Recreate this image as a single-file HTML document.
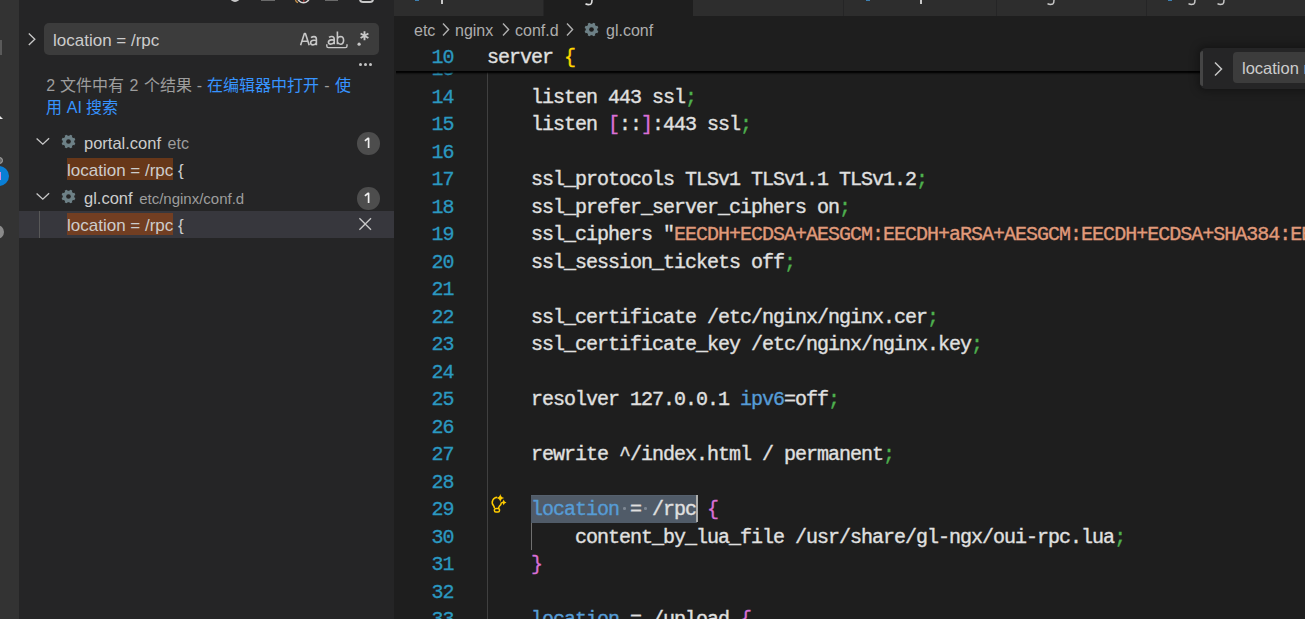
<!DOCTYPE html>
<html lang="zh-CN"><head><meta charset="utf-8">
<style>
*{box-sizing:border-box;margin:0;padding:0}
html,body{width:1305px;height:619px;overflow:hidden;background:#1e1e1e;font-family:"Liberation Sans",sans-serif;position:relative}
.a{position:absolute}
.t{position:absolute;white-space:pre;font-size:17px;line-height:22px;color:#cccccc}
.code{position:absolute;left:487px;white-space:pre;font-family:"Liberation Mono",monospace;font-size:20px;letter-spacing:-1px;line-height:27.5px;height:27.5px;color:#e0e0e0;padding-top:1.45px;-webkit-text-stroke:0.35px}
.ln{position:absolute;left:393.5px;width:60px;text-align:right;font-family:"Liberation Mono",monospace;font-size:20px;letter-spacing:-1px;line-height:27.5px;height:27.5px;color:#2b98c0;padding-top:1.45px;-webkit-text-stroke:0.3px}
.semi{color:#4eb04e}
.b1{color:#ffd700}
.b2{color:#da70d6}
.kw{color:#569cd6}
.str{color:#e09a7a}
.ws{color:#6a7380}
</style></head><body>
<svg width="0" height="0" style="position:absolute"><defs>
<mask id="gm"><rect x="0" y="0" width="16" height="16" fill="#fff"/><circle cx="8" cy="8" r="2.5" fill="#000"/></mask>
<symbol id="gear" viewBox="0 0 16 16"><g mask="url(#gm)" fill="#6d8086"><circle cx="8" cy="8" r="6.1"/><path d="M11.97 11.48 L14.34 12.03 L15.33 9.63 L13.27 8.34ZM8.34 13.27 L9.63 15.33 L12.03 14.34 L11.48 11.97ZM4.52 11.97 L3.97 14.34 L6.37 15.33 L7.66 13.27ZM2.73 8.34 L0.67 9.63 L1.66 12.03 L4.03 11.48ZM4.03 4.52 L1.66 3.97 L0.67 6.37 L2.73 7.66ZM7.66 2.73 L6.37 0.67 L3.97 1.66 L4.52 4.03ZM11.48 4.03 L12.03 1.66 L9.63 0.67 L8.34 2.73ZM13.27 7.66 L15.33 6.37 L14.34 3.97 L11.97 4.52Z"/></g></symbol>
</defs></svg>
<!-- activity bar -->
<div class="a" style="left:0;top:0;width:19px;height:619px;background:#333333"></div>
<div class="a" style="left:0;top:40px;width:2px;height:15px;background:#5a5a5a"></div>
<div class="a" style="left:-5px;top:115px;width:0;height:0;border-left:4.5px solid transparent;border-right:4.5px solid transparent;border-bottom:4px solid #e8e8e8"></div>
<div class="a" style="left:-4.5px;top:156.5px;width:7.5px;height:7.5px;border-radius:50%;background:#6a6a6a;border:1.5px solid #a8a8a8"></div>
<div class="a" style="left:-11px;top:166px;width:20px;height:20px;border-radius:50%;background:#0a7fd6"></div>
<div class="a" style="left:0;top:172px;width:1px;height:8px;background:#d58ae6"></div>
<div class="a" style="left:-10px;top:225px;width:14px;height:14px;border-radius:50%;background:#8a8a8a"></div>

<!-- sidebar -->
<div class="a" style="left:19px;top:0;width:375px;height:619px;background:#252526"></div>
<!-- top cut icons -->
<div class="a" style="left:230px;top:-8px;width:10px;height:10px;border-radius:50%;background:#c8c8c8"></div>
<div class="a" style="left:261px;top:0;width:14px;height:1px;background:#6a6a6a"></div>
<svg class="a" style="left:290px;top:0" width="24" height="6" viewBox="290 0 24 6"><path d="M295.5 0 Q296 2 298 2.6" fill="none" stroke="#c89048" stroke-width="1.3"/><circle cx="303.5" cy="-3.2" r="6" fill="none" stroke="#d8d8d8" stroke-width="1.6"/><path d="M303.8 0 V2" stroke="#c04040" stroke-width="1.2"/></svg>
<div class="a" style="left:325px;top:0;width:13px;height:1px;background:#6a6a6a"></div>
<div class="a" style="left:359px;top:-10px;width:15px;height:13px;border-radius:4px;border:2px solid #c8c8c8"></div>

<!-- chevron -->
<svg class="a" style="left:27px;top:32px" width="14" height="16" viewBox="0 0 14 16"><path d="M1.8 1.6 L7.8 7.3 L1.8 13" fill="none" stroke="#c8c8c8" stroke-width="1.35"/></svg>
<!-- search box -->
<div class="a" style="left:44px;top:23px;width:335px;height:32px;background:#3c3c3c;border-radius:5px"></div>
<div class="t" style="left:53px;top:30px">location = /rpc</div>
<svg class="a" style="left:290px;top:24px" width="90" height="30" viewBox="290 24 90 30">
<g fill="none" stroke="#c8c8c8" stroke-width="1.6" stroke-linejoin="round">
<path d="M300.6 45.2 L304.4 33.6 H305.4 L309.2 45.2 M301.9 41.3 H307.9"/>
<path d="M311 37.6 Q312.5 36.5 314.2 36.6 Q316.4 36.8 316.4 39.2 V45.2 M316.4 40.6 Q315.8 40.1 313.8 40.2 Q310.6 40.5 310.6 42.7 Q310.7 44.9 312.9 44.9 Q315.2 44.9 316.4 42.6"/>
<path d="M329 37.4 Q330.3 36.4 331.9 36.5 Q334.2 36.7 334.2 39 V44.2 M334.2 40.2 Q333.5 39.8 331.6 39.9 Q328.4 40.2 328.4 42.2 Q328.6 44.1 330.6 44.1 Q333 44.1 334.2 42.1"/>
<path d="M337.4 31.4 V44.2 M337.4 38.8 Q338.2 36.5 340.5 36.5 Q343.6 36.6 343.6 40.3 Q343.6 44.2 340.5 44.2 Q338.2 44.2 337.4 42"/>
<path d="M326.8 44.2 V46 Q326.8 47.6 328.4 47.6 H345.4 Q347 47.6 347 46 V44.2" stroke-width="1.4"/>
</g>
<circle cx="359.1" cy="44.2" r="1.6" fill="#c8c8c8"/>
<g stroke="#c8c8c8" stroke-width="1.9" stroke-linecap="butt"><path d="M364.5 31.3 V40.2 M360.6 33.5 L368.4 38 M360.6 38 L368.4 33.5"/></g>
</svg>
<!-- more dots -->
<div class="a" style="left:359px;top:63px;width:3px;height:3px;border-radius:50%;background:#c5c5c5"></div>
<div class="a" style="left:364px;top:63px;width:3px;height:3px;border-radius:50%;background:#c5c5c5"></div>
<div class="a" style="left:369px;top:63px;width:3px;height:3px;border-radius:50%;background:#c5c5c5"></div>

<!-- message -->
<div class="t" style="left:46.3px;top:75px;font-size:16px;color:#9d9d9d;word-spacing:0.7px">2 文件中有 2 个结果 - <span style="color:#3794ff">在编辑器中打开</span> - <span style="color:#3794ff">使</span></div>
<div class="t" style="left:46.3px;top:97px;font-size:16px;color:#3794ff">用 AI 搜索</div>

<!-- tree rows -->
<div class="a" style="left:19px;top:211px;width:375px;height:27px;background:#37373d"></div>
<div class="a" style="left:39px;top:211px;width:1px;height:27px;background:#585858"></div>

<svg class="a" style="left:35px;top:134px" width="16" height="16" viewBox="0 0 16 16"><path d="M1.6 4.4 L7.8 10.2 L14.1 4.3" fill="none" stroke="#c8c8c8" stroke-width="1.35"/></svg>
<svg class="a" style="left:35px;top:189px" width="16" height="16" viewBox="0 0 16 16"><path d="M1.6 4.4 L7.8 10.2 L14.1 4.3" fill="none" stroke="#c8c8c8" stroke-width="1.35"/></svg>

<svg class="a" style="left:61px;top:134px" width="15" height="15"><use href="#gear"/></svg>
<svg class="a" style="left:61px;top:189px" width="15" height="15"><use href="#gear"/></svg>

<div class="t" style="left:84px;top:132px;font-size:16.5px">portal.conf<span style="color:#9d9d9d;font-size:16px;margin-left:6.5px">etc</span></div>
<div class="a" style="left:67px;top:158px;width:106px;height:22px;background:#673719"></div>
<div class="t" style="left:67px;top:160px">location = /rpc {</div>
<div class="t" style="left:84px;top:187px;font-size:16.5px">gl.conf<span style="color:#9d9d9d;font-size:15px;margin-left:6.5px">etc/nginx/conf.d</span></div>
<div class="a" style="left:67px;top:213px;width:106px;height:22px;background:#723e22"></div>
<div class="t" style="left:67px;top:215px">location = /rpc {</div>

<!-- badges -->
<div class="a" style="left:357px;top:132px;width:22.5px;height:22.5px;border-radius:50%;background:#4d4d4d"></div>
<svg class="a" style="left:357px;top:132px" width="23" height="23" viewBox="357 132 23 23"><path d="M364.9 140.9 L367.9 138.4 H368.6 V148" fill="none" stroke="#f0f0f0" stroke-width="1.7" stroke-linejoin="round"/></svg>
<div class="a" style="left:357px;top:187px;width:22.5px;height:22.5px;border-radius:50%;background:#4d4d4d"></div>
<svg class="a" style="left:357px;top:187px" width="23" height="23" viewBox="357 132 23 23"><path d="M364.9 140.9 L367.9 138.4 H368.6 V148" fill="none" stroke="#f0f0f0" stroke-width="1.7" stroke-linejoin="round"/></svg>
<!-- close x -->
<svg class="a" style="left:357px;top:216px" width="16" height="16" viewBox="0 0 16 16"><path d="M2.4 2.2 L14 13.8 M14 2.2 L2.4 13.8" stroke="#c8c8c8" stroke-width="1.35"/></svg>

<!-- editor -->
<div class="a" style="left:394px;top:0;width:911px;height:16px;background:#252526"></div>
<div class="a" style="left:394px;top:0;width:149px;height:16px;background:#2d2d2d"></div>
<div class="a" style="left:544px;top:0;width:149px;height:16px;background:#1e1e1e"></div>
<div class="a" style="left:693px;top:0;width:150px;height:16px;background:#2d2d2d"></div>
<div class="a" style="left:844px;top:0;width:152px;height:16px;background:#2d2d2d"></div>
<div class="a" style="left:997px;top:0;width:149px;height:16px;background:#2d2d2d"></div>
<div class="a" style="left:1147px;top:0;width:158px;height:16px;background:#2d2d2d"></div>

<!-- tab label remnants -->
<div class="a" style="left:415px;top:0;width:4px;height:1px;background:#3d7fb0"></div>
<div class="a" style="left:441px;top:0;width:2px;height:4px;background:#c8c8c8"></div>
<svg class="a" style="left:584px;top:0" width="10" height="6" viewBox="0 0 10 6"><path d="M1.5 3.8 Q4 5.2 6.8 4.2 Q8 3.4 8 0" fill="none" stroke="#e0e0e0" stroke-width="1.6"/></svg>
<div class="a" style="left:866px;top:0;width:4px;height:1px;background:#3d7fb0"></div>
<div class="a" style="left:920px;top:0;width:2px;height:4px;background:#c8c8c8"></div>
<svg class="a" style="left:1046px;top:0" width="10" height="6" viewBox="0 0 10 6"><path d="M1.5 3.6 Q4 5 6.8 4 Q8 3.2 8 0" fill="none" stroke="#c8c8c8" stroke-width="1.5"/></svg>
<div class="a" style="left:1168px;top:0;width:4px;height:1px;background:#3d7fb0"></div>
<svg class="a" style="left:1187px;top:0" width="10" height="6" viewBox="0 0 10 6"><path d="M1.5 3.6 Q4 5 6.8 4 Q8 3.2 8 0" fill="none" stroke="#c8c8c8" stroke-width="1.5"/></svg>
<svg class="a" style="left:1216px;top:0" width="10" height="6" viewBox="0 0 10 6"><path d="M1.5 3.6 Q4 5 6.8 4 Q8 3.2 8 0" fill="none" stroke="#c8c8c8" stroke-width="1.5"/></svg>

<!-- breadcrumbs -->
<div class="t" style="left:414px;top:20px;font-size:16px;color:#adadad">etc</div>
<svg class="a" style="left:440px;top:22px" width="12" height="16" viewBox="0 0 12 16"><path d="M3 1.4 L8.6 7.4 L3 13.4" fill="none" stroke="#b0b0b0" stroke-width="1.4"/></svg>
<div class="t" style="left:455px;top:20px;font-size:16px;color:#adadad">nginx</div>
<svg class="a" style="left:500px;top:22px" width="12" height="16" viewBox="0 0 12 16"><path d="M3 1.4 L8.6 7.4 L3 13.4" fill="none" stroke="#b0b0b0" stroke-width="1.4"/></svg>
<div class="t" style="left:515px;top:20px;font-size:16px;color:#adadad">conf.d</div>
<svg class="a" style="left:564px;top:22px" width="12" height="16" viewBox="0 0 12 16"><path d="M3 1.4 L8.6 7.4 L3 13.4" fill="none" stroke="#b0b0b0" stroke-width="1.4"/></svg>
<svg class="a" style="left:583.5px;top:21.5px" width="15" height="15"><use href="#gear"/></svg>
<div class="t" style="left:606px;top:20px;font-size:16px;color:#adadad">gl.conf</div>

<!-- indent guides -->
<div class="a" style="left:487px;top:71px;width:1px;height:548px;background:#404040"></div>
<div class="a" style="left:531px;top:522px;width:1px;height:28px;background:#707070"></div>

<!-- line numbers -->
<div class="ln" style="top:54.75px">13</div>
<div class="ln" style="top:82.25px">14</div>
<div class="ln" style="top:109.75px">15</div>
<div class="ln" style="top:137.25px">16</div>
<div class="ln" style="top:164.75px">17</div>
<div class="ln" style="top:192.25px">18</div>
<div class="ln" style="top:219.75px">19</div>
<div class="ln" style="top:247.25px">20</div>
<div class="ln" style="top:274.75px">21</div>
<div class="ln" style="top:302.25px">22</div>
<div class="ln" style="top:329.75px">23</div>
<div class="ln" style="top:357.25px">24</div>
<div class="ln" style="top:384.75px">25</div>
<div class="ln" style="top:412.25px">26</div>
<div class="ln" style="top:439.75px">27</div>
<div class="ln" style="top:467.25px">28</div>
<div class="ln" style="top:494.75px">29</div>
<div class="ln" style="top:522.25px">30</div>
<div class="ln" style="top:549.75px">31</div>
<div class="ln" style="top:577.25px">32</div>
<div class="ln" style="top:604.75px">33</div>

<!-- selection -->
<div class="a" style="left:531px;top:495px;width:166px;height:27.5px;background:#505b68;border-top:1px solid #56616e"></div>
<div class="a" style="left:623.2px;top:507.3px;width:2.6px;height:2.6px;border-radius:50%;background:#7d8793"></div>
<div class="a" style="left:644.2px;top:507.3px;width:2.6px;height:2.6px;border-radius:50%;background:#7d8793"></div>
<div class="a" style="left:696px;top:495px;width:2px;height:27px;background:#aeafad"></div>

<!-- code -->
<div class="code" style="top:82.25px">    listen 443 ssl<span class="semi">;</span></div>
<div class="code" style="top:109.75px">    listen <span class="b2">[</span>::<span class="b2">]</span>:443 ssl<span class="semi">;</span></div>
<div class="code" style="top:164.75px">    ssl_protocols TLSv1 TLSv1.1 TLSv1.2<span class="semi">;</span></div>
<div class="code" style="top:192.25px">    ssl_prefer_server_ciphers on<span class="semi">;</span></div>
<div class="code" style="top:219.75px">    ssl_ciphers "<span class="str">EECDH+ECDSA+AESGCM:EECDH+aRSA+AESGCM:EECDH+ECDSA+SHA384:EECDH+</span></div>
<div class="code" style="top:247.25px">    ssl_session_tickets off<span class="semi">;</span></div>
<div class="code" style="top:302.25px">    ssl_certificate /etc/nginx/nginx.cer<span class="semi">;</span></div>
<div class="code" style="top:329.75px">    ssl_certificate_key /etc/nginx/nginx.key<span class="semi">;</span></div>
<div class="code" style="top:384.75px">    resolver 127.0.0.1 <span class="kw">ipv6</span>=off<span class="semi">;</span></div>
<div class="code" style="top:439.75px">    rewrite ^/index.html / permanent<span class="semi">;</span></div>
<div class="code" style="top:494.75px">    <span class="kw">location</span> = /rpc <span class="b2">{</span></div>
<div class="code" style="top:522.25px">        content_by_lua_file /usr/share/gl-ngx/oui-rpc.lua<span class="semi">;</span></div>
<div class="code" style="top:549.75px">    <span class="b2">}</span></div>
<div class="code" style="top:604.75px">    <span class="kw">location</span> = /upload <span class="b2">{</span></div>

<!-- lightbulb -->
<svg class="a" style="left:484px;top:490px" width="26" height="26" viewBox="0 0 26 26">
<path d="M13.2 7.3 A5.1 5.1 0 0 0 9.4 15.6 Q10.2 16.6 10.4 18.2" fill="none" stroke="#ffcc00" stroke-width="1.55"/>
<path d="M17.4 12.5 A5.1 5.1 0 0 1 15.4 16.2 Q14.6 17 14.6 18.2" fill="none" stroke="#ffcc00" stroke-width="1.55"/>
<rect x="10.4" y="18.4" width="5.1" height="3.6" rx="1.5" fill="none" stroke="#ffcc00" stroke-width="1.5"/>
<path d="M16.3 3.9 Q16.9 7.3 20.3 7.9 Q16.9 8.5 16.3 11.9 Q15.7 8.5 12.3 7.9 Q15.7 7.3 16.3 3.9Z" fill="#ffcc00"/>
<path d="M19.7 9.6 Q20.1 12 22.5 12.4 Q20.1 12.8 19.7 15.2 Q19.3 12.8 16.9 12.4 Q19.3 12 19.7 9.6Z" fill="#ffcc00"/>
</svg>

<!-- sticky scroll -->
<div class="a" style="left:394px;top:44px;width:911px;height:27px;background:#1e1e1e"></div>
<div class="a" style="left:396px;top:71px;width:909px;height:4px;background:linear-gradient(rgba(0,0,0,1) 0%,rgba(0,0,0,0.85) 35%,rgba(0,0,0,0.3) 65%,rgba(0,0,0,0) 100%)"></div>
<div class="ln" style="top:42.1px">10</div>
<div class="code" style="top:42.1px">server <span class="b1">{</span></div>
<!-- breadcrumb bg -->

<!-- find widget -->
<div class="a" style="left:1200px;top:48px;width:120px;height:41px;background:#252526;border-radius:6px;box-shadow:0 0 8px 2px rgba(0,0,0,0.36)"></div>
<div class="a" style="left:1200px;top:51px;width:3px;height:35px;background:#454545;border-radius:3px 0 0 3px"></div>
<svg class="a" style="left:1211px;top:60px" width="14" height="18" viewBox="0 0 14 18"><path d="M4 2.5 L10.5 9 L4 15.5" fill="none" stroke="#c5c5c5" stroke-width="1.5"/></svg>
<div class="a" style="left:1233px;top:52px;width:90px;height:31px;background:#3c3c3c;border-radius:4px"></div>
<div class="t" style="left:1242px;top:57px;font-size:16.5px">location r</div>
</body></html>
